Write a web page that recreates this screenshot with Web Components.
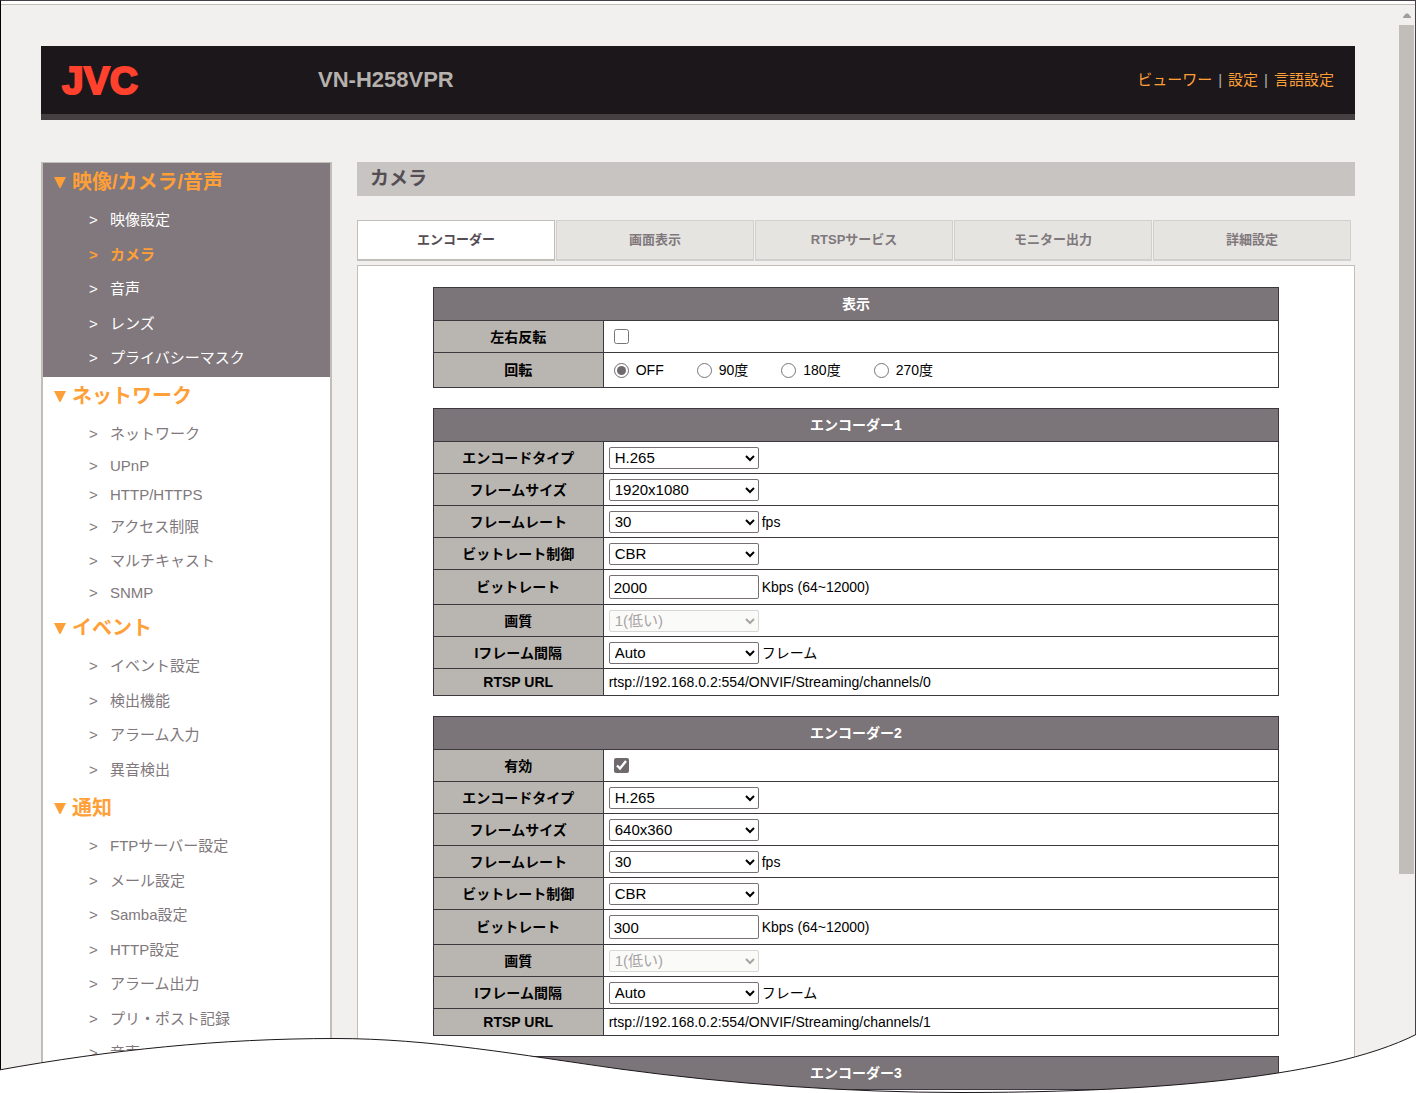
<!DOCTYPE html>
<html lang="ja">
<head>
<meta charset="utf-8">
<title>VN-H258VPR</title>
<style>
  :root {
    --bg: #f1f0ee;
    --line: #c1beba;
    --grid: #3d383d;
    --orange: #ff9f38;
    --gray: #80787c;
  }
  body {
    margin: 0;
    background: #fff;
    font-family: "Liberation Sans", "Noto Sans CJK JP", sans-serif;
    color: #000;
  }
</style>
</head>
<body>
<browser-frame>
  <top-bar model="VN-H258VPR"></top-bar>
  <two-columns>
    <side-menu slot="side">
      <menu-section heading="映像/カメラ/音声" open>
        <menu-item>映像設定</menu-item>
        <menu-item current>カメラ</menu-item>
        <menu-item>音声</menu-item>
        <menu-item>レンズ</menu-item>
        <menu-item>プライバシーマスク</menu-item>
      </menu-section>
      <menu-section heading="ネットワーク">
        <menu-item>ネットワーク</menu-item>
        <menu-item latin>UPnP</menu-item>
        <menu-item latin>HTTP/HTTPS</menu-item>
        <menu-item>アクセス制限</menu-item>
        <menu-item>マルチキャスト</menu-item>
        <menu-item latin>SNMP</menu-item>
      </menu-section>
      <menu-section heading="イベント">
        <menu-item>イベント設定</menu-item>
        <menu-item>検出機能</menu-item>
        <menu-item>アラーム入力</menu-item>
        <menu-item>異音検出</menu-item>
      </menu-section>
      <menu-section heading="通知">
        <menu-item>FTPサーバー設定</menu-item>
        <menu-item>メール設定</menu-item>
        <menu-item>Samba設定</menu-item>
        <menu-item>HTTP設定</menu-item>
        <menu-item>アラーム出力</menu-item>
        <menu-item>プリ・ポスト記録</menu-item>
        <menu-item>音声</menu-item>
      </menu-section>
    </side-menu>
    <page-title>カメラ</page-title>
    <tab-bar>
      <tab-button selected>エンコーダー</tab-button>
      <tab-button>画面表示</tab-button>
      <tab-button>RTSPサービス</tab-button>
      <tab-button>モニター出力</tab-button>
      <tab-button>詳細設定</tab-button>
    </tab-bar>
    <tab-panel>
      <display-settings></display-settings>
      <encoder-settings number="1" size="1920x1080" bitrate="2000" channel="0"></encoder-settings>
      <encoder-settings number="2" size="640x360" bitrate="300" channel="1" optional></encoder-settings>
      <encoder-settings number="3" collapsed></encoder-settings>
    </tab-panel>
  </two-columns>
</browser-frame>

<script>
const define = (name, render) => customElements.define(name, class extends HTMLElement {
  connectedCallback() {
    if (this.shadowRoot) return;
    this.attachShadow({ mode: 'open' }).innerHTML = render(this);
  }
});

/* Window outline, scroll bar and the torn lower edge */
define('browser-frame', () => `
  <style>
    :host { display: block; position: relative; height: 100vh; overflow: hidden; }
    .window { display: flex; flex-direction: column; box-sizing: border-box; height: 100%;
      background: var(--bg); border: 1px solid #454045; border-left-color: #000; border-bottom: 0; }
    .strip { flex: none; height: 3px; background: #fff; border-bottom: 1px solid var(--line); }
    .row { display: flex; flex: 1; min-height: 0; }
    main { flex: 1; min-width: 0; padding: 41px 44px 0 40px; }
    .scroll { flex: none; width: 15px; display: flex; flex-direction: column; align-items: center; margin-right: 1px; }
    .scroll svg { flex: none; margin: 8px 0 7px; }
    .thumb { width: 15px; height: 78%; background: var(--line); }
    .tear { position: absolute; left: 0; bottom: 0; width: 100%; height: 60px; display: block; }
  </style>
  <div class="window">
    <div class="strip"></div>
    <div class="row">
      <main><slot></slot></main>
      <div class="scroll">
        <svg width="8" height="5" viewBox="0 0 8 5"><path d="M0 5V4L3 0.5H5L8 4V5Z" fill="#a29d9d"/></svg>
        <div class="thumb"></div>
      </div>
    </div>
  </div>
  <svg class="tear" viewBox="0 0 1416 60" preserveAspectRatio="none" aria-hidden="true">
    <path d="M-1 37C110 17 220 5.500 335 5.500C430 5.500 520 22 620 36C730 51 850 59.500 960 59.500C1130 59.500 1325 48 1417 1V64H-1Z" fill="#fff" stroke="#1c171a" stroke-width="1"/>
  </svg>`);

define('top-bar', el => `
  <style>
    :host { display: flex; align-items: center; height: 68px; padding: 0 21px; background: #1c171a; border-bottom: 6px solid #453f42; }
    .logo { width: 256px; padding-top: 2px; font-size: 39px; line-height: 40px; font-weight: bold; color: #ff412e;
      -webkit-text-stroke: 2px #ff412e; }
    .model { flex: 1; font-size: 22px; font-weight: bold; color: #b5b1ad; }
    nav { display: flex; align-items: baseline; gap: 6px; font-size: 15px; line-height: 22px; color: #b5b1ad; }
    a { color: var(--orange); text-decoration: none; }
  </style>
  <div class="logo">JVC</div>
  <div class="model">${el.getAttribute('model')}</div>
  <nav><a href="#viewer">ビューワー</a><span>|</span><a href="#setup">設定</a><span>|</span><a href="#language">言語設定</a></nav>`);

define('two-columns', () => `
  <style>
    :host { display: flex; gap: 25px; margin-top: 42px; }
    .main { flex: 1; min-width: 0; }
  </style>
  <slot name="side"></slot>
  <div class="main"><slot></slot></div>`);

define('side-menu', () => `
  <style>
    :host { display: block; flex: none; box-sizing: border-box; width: 291px; background: #fff;
      border: 2px solid var(--line); border-top-width: 1px; }
  </style>
  <slot></slot>`);

define('menu-section', el => `
  <style>
    :host { display: block; padding-bottom: 2px; --item: var(--gray); }
    :host([open]) { background: var(--gray); --item: #fff; }
    h2 { display: flex; align-items: center; gap: 6px; height: 38px; margin: 0 0 2px; padding-left: 11px;
      font-size: 20px; line-height: 38px; color: var(--orange); }
    svg { flex: none; }
    ::slotted(menu-item) { height: 34px; }
    ::slotted(menu-item:nth-child(even)) { height: 35px; }
    ::slotted(menu-item[latin]) { height: 29px; }
  </style>
  <h2><svg width="12" height="11" viewBox="0 0 12 11"><path d="M0 0H12L6.500 11H5.500Z" fill="currentColor"/></svg>${el.getAttribute('heading')}</h2>
  <slot></slot>`);

define('menu-item', () => `
  <style>
    :host { display: flex; align-items: center; padding-left: 46px; font-size: 15px; line-height: 22px; color: var(--item); }
    :host([current]) { color: var(--orange); font-weight: bold; }
    a { display: flex; color: inherit; text-decoration: none; }
    a::before { content: ">"; width: 21px; }
  </style>
  <a href="#item"><slot></slot></a>`);

define('page-title', () => `
  <style>
    :host { display: block; background: #c8c4c1; }
    h1 { margin: 0; padding: 0 13px; font-size: 19px; line-height: 34px; color: #544e54; }
  </style>
  <h1><slot></slot></h1>`);

define('tab-bar', () => `
  <style>
    :host { display: flex; gap: 1px; margin: 24px 4px 4px 0; }
  </style>
  <slot></slot>`);

define('tab-button', () => `
  <style>
    :host { display: block; flex: 1; }
    button { display: block; box-sizing: border-box; width: 100%; height: 41px; margin: 0; padding: 0;
      font: bold 13px/38px "Liberation Sans", "Noto Sans CJK JP", sans-serif; color: var(--gray);
      background: #e5e4e0; border: 1px solid #d2d0cc; border-bottom-width: 2px; }
    :host([selected]) button { background: #fff; border-color: var(--line); color: #544e54; }
  </style>
  <button type="button"><slot></slot></button>`);

define('tab-panel', () => `
  <style>
    :host { display: flex; flex-direction: column; align-items: center; gap: 20px; padding: 21px 0 22px;
      background: #fff; border: 1px solid var(--line); }
    ::slotted(*) { width: 85%; }
  </style>
  <slot></slot>`);

const tableStyle = `
  <style>
    :host { display: block; font-size: 14px; }
    table { width: 100%; table-layout: fixed; border-collapse: separate; border-spacing: 0;
      border: 1px solid var(--grid); border-width: 1px 0 0 1px; }
    th, td { box-sizing: border-box; height: 32px; padding: 0; line-height: 20px;
      border: 1px solid var(--grid); border-width: 0 1px 1px 0; }
    thead th { height: 33px; background: #7b7478; color: #fff; }
    tbody th { background: #b9b5b0; }
    tr.tall > * { height: 35px; }
    tr.short > * { height: 27px; }
    col.name { width: 170px; }
    td { padding-left: 5px; }
    .cell { display: flex; align-items: center; gap: 3px; }
    select, input.text { box-sizing: border-box; width: 150px; height: 22px; margin: 0; font: 15px "Liberation Sans", "Noto Sans CJK JP", sans-serif;
      background-color: #fff; color: #000; border: 1px solid #767074; border-radius: 2px; }
    select { padding: 0 1px; }
    input.text { height: 24px; padding: 0 4px; }
    select:disabled { color: #a8a4a4; border-color: #d8d6d4; background-color: #fafaf9; opacity: 1; }
    input[type=checkbox], input[type=radio] { width: 15px; height: 15px; margin: 0 0 0 5px; accent-color: #6f696e; }
    .radios { display: flex; gap: 33px; padding-left: 5px; }
    .radios > span { display: flex; align-items: center; gap: 7px; }
    .radios input[type=radio] { margin: 0; }
  </style>`;

const row = (label, id, control, cls = '') =>
  `<tr class="${cls}"><th scope="row">${id ? `<label for="${id}">${label}</label>` : label}</th><td><div class="cell">${control}</div></td></tr>`;
const table = (title, rows) =>
  `${tableStyle}<table><colgroup><col class="name"><col></colgroup><thead><tr><th colspan="2">${title}</th></tr></thead><tbody>${rows}</tbody></table>`;
const select = (id, value, unit = '', extra = '') =>
  `<select id="${id}" ${extra}><option>${value}</option></select>${unit && `<span>${unit}</span>`}`;

define('display-settings', () => table('表示',
  row('左右反転', 'mirror', '<input type="checkbox" id="mirror">') +
  row('回転', '', `<div class="radios" role="radiogroup" aria-label="回転">${['OFF', '90度', '180度', '270度'].map((t, i) =>
    `<span><input type="radio" name="rotate" id="r${i}" ${i ? '' : 'checked'}><label for="r${i}">${t}</label></span>`).join('')}</div>`, 'tall')));

define('encoder-settings', el => {
  const get = name => el.getAttribute(name);
  const title = 'エンコーダー' + get('number');
  if (el.hasAttribute('collapsed')) return table(title, '');
  return table(title,
    (el.hasAttribute('optional') ? row('有効', 'enabled', '<input type="checkbox" id="enabled" checked>') : '') +
    row('エンコードタイプ', 'type', select('type', 'H.265')) +
    row('フレームサイズ', 'size', select('size', get('size'))) +
    row('フレームレート', 'rate', select('rate', '30', 'fps')) +
    row('ビットレート制御', 'control', select('control', 'CBR')) +
    row('ビットレート', 'bitrate', `<input class="text" type="text" id="bitrate" value="${get('bitrate')}"><span>Kbps (64~12000)</span>`, 'tall') +
    row('画質', 'quality', select('quality', '1(低い)', '', 'disabled')) +
    row('Iフレーム間隔', 'interval', select('interval', 'Auto', 'フレーム')) +
    row('RTSP URL', '', `<span>rtsp://192.168.0.2:554/ONVIF/Streaming/channels/${get('channel')}</span>`, 'short'));
});
</script>
</body>
</html>
